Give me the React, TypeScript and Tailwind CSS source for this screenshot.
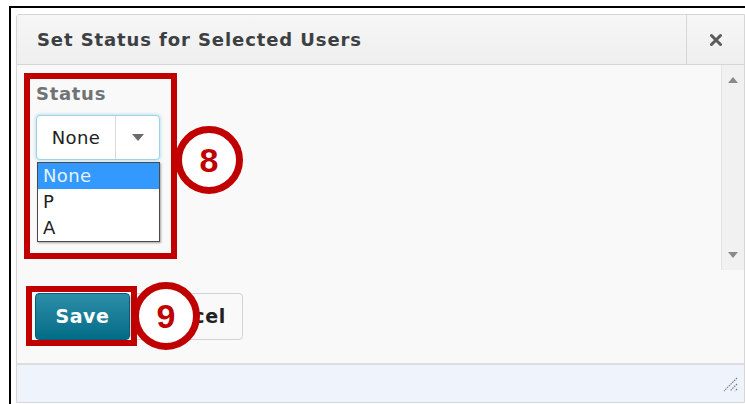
import React from 'react';

const font = { fontFamily: '"DejaVu Sans", Verdana, sans-serif' };
const numFont = { fontFamily: '"Liberation Sans", Arial, sans-serif' };

function Marker({ n, className }: { n: string; className: string }) {
  return (
    <div
      className={`absolute w-[68px] h-[68px] rounded-full border-[7px] border-[#c00000] bg-white flex items-center justify-center text-[#c00000] font-bold text-[34px] leading-none ${className}`}
      style={numFont}
    >
      {n}
    </div>
  );
}

export default function App() {
  return (
    <div className="w-[745px] h-[404px] bg-white overflow-hidden pt-[6px] pl-[9px]" style={font}>
      <div className="h-full border-l-[2px] border-t-[2px] border-black pl-[5px] pt-[6px]">
        <div className="relative h-[389px] border border-[#d6d6d6] rounded-tl-[3px] bg-[#f9f9f9] flex flex-col">
          {/* header */}
          <div className="h-[50px] shrink-0 flex border-b border-[#d6d6d6] bg-gradient-to-b from-[#f6f6f6] to-[#efefef]">
            <div className="flex-1 flex items-center pl-[20px] text-[18px] tracking-[0.9px] font-bold text-[#3d4043]">
              Set Status for Selected Users
            </div>
            <div className="w-[58px] border-l border-[#d6d6d6] flex items-center justify-center text-[#555]">
              <svg width="14" height="14" viewBox="0 0 14 14">
                <path d="M2.5 2.5 L11.5 11.5 M11.5 2.5 L2.5 11.5" stroke="#5a5a5a" strokeWidth="3" strokeLinecap="round" />
              </svg>
            </div>
          </div>

          {/* scrolling body */}
          <div className="h-[205px] shrink-0 flex">
            <div className="flex-1 pl-[19px] pt-[19px]">
              <div className="text-[18px] tracking-[0.7px] font-bold text-[#6e7376] leading-[20px]">Status</div>
              <div className="relative mt-[11px] w-[124px]">
                <div className="h-[45px] flex rounded-[4px] border border-[#9fd3e3] bg-white shadow-[0_0_3px_1px_rgba(120,200,225,0.45)]">
                  <div className="w-[79px] flex items-center justify-center text-[18px] tracking-[0.4px] text-[#202122] border-r border-[#d9d9d9]">
                    None
                  </div>
                  <div className="flex-1 flex items-center justify-center">
                    <svg width="12" height="7" viewBox="0 0 12 7">
                      <path d="M0 0 H12 L6 7 Z" fill="#6b6b6b" />
                    </svg>
                  </div>
                </div>
                {/* open option list */}
                <div className="absolute left-[1px] top-[47px] w-[123px] border border-[#4a4a4a] bg-white shadow-[1px_1px_2px_rgba(0,0,0,0.35)] text-[18px] tracking-[0.4px] leading-[26px]">
                  <div className="bg-[#3399ff] text-[#e6f2ff] pl-[5px]">None</div>
                  <div className="pl-[5px] text-[#202122]">P</div>
                  <div className="pl-[5px] text-[#202122]">A</div>
                </div>
              </div>
            </div>
            <div className="w-[23px] bg-[#f1f1f1] border-l border-[#e3e3e3] flex flex-col items-center justify-between py-[12px]">
              <svg width="10" height="6" viewBox="0 0 10 6">
                <path d="M0 6 L5 0 L10 6 Z" fill="#8a8a8a" />
              </svg>
              <svg width="10" height="6" viewBox="0 0 10 6">
                <path d="M0 0 H10 L5 6 Z" fill="#8a8a8a" />
              </svg>
            </div>
          </div>

          {/* buttons */}
          <div className="flex-1 flex items-start pl-[18px] pt-[23px]">
            <button className="w-[95px] h-[47px] rounded-[4px] bg-gradient-to-b from-[#2b8ea8] to-[#006c87] border border-[#00607a] text-white font-bold text-[19px] tracking-[0.6px]">
              Save
            </button>
            <button className="w-[113px] h-[47px] rounded-[4px] bg-[#f9f9f9] border border-[#d3d3d3] text-[#202122] font-bold text-[19px] tracking-[0.6px] pl-[4px]">
              Cancel
            </button>
          </div>

          {/* footer */}
          <div className="h-[39px] shrink-0 bg-[#eff3fb] border-t-[2px] border-[#dcdcdc] flex items-center justify-end pr-[6px]">
            <svg width="16" height="16" viewBox="0 0 16 16">
              <path d="M15 2 L2 15 M15 8 L8 15 M15 13 L13 15" stroke="#777" strokeWidth="1.2" strokeDasharray="1.5 1" />
            </svg>
          </div>

          {/* callouts */}
          <div className="absolute left-[7px] top-[58px] w-[153px] h-[186px] border-[6px] border-[#c00000]" />
          <Marker n="8" className="left-[158px] top-[111px]" />
          <div className="absolute left-[9px] top-[271px] w-[111px] h-[60px] border-[6px] border-[#c00000]" />
          <Marker n="9" className="left-[115px] top-[267px]" />
        </div>
      </div>
    </div>
  );
}
